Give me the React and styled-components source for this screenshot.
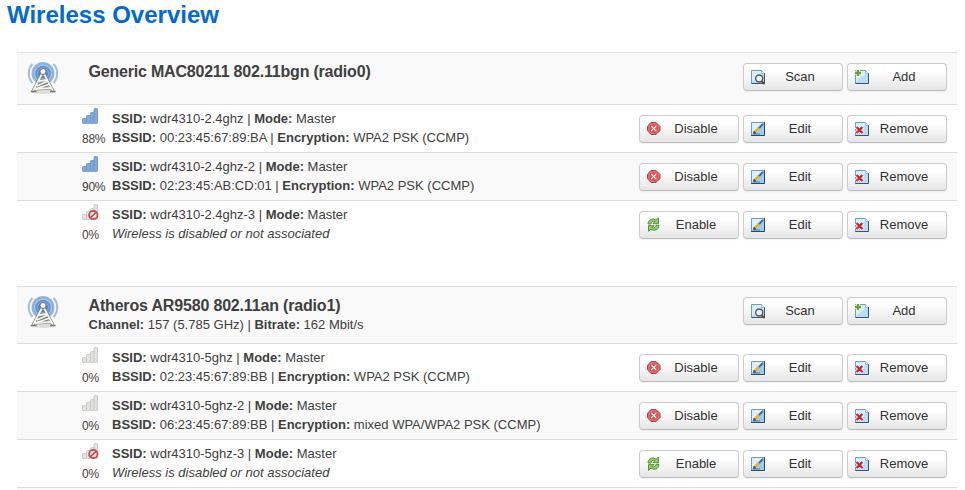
import React from "react";
import styled, { createGlobalStyle } from "styled-components";

const GlobalStyle = createGlobalStyle`
  * { box-sizing: border-box; }
  body {
    margin: 0;
    background: #fff;
    color: #404040;
    font: 13px/19px "Liberation Sans", Arial, sans-serif;
    overflow: hidden;
  }
`;

const Page = styled.main`
  width: 965px;
  height: 490px;
  overflow: hidden;
`;
const Title = styled.h2`
  margin: 0;
  height: 52px;
  padding-left: 7px;
  color: #0069d6;
  font-size: 24px;
  line-height: 30px;
`;
const Radio = styled.section`
  width: 940px;
  margin: 0 0 38px 17px;
`;
const Row = styled.div`
  display: flex;
  align-items: flex-start;
  height: ${(p) => p.$height || 48}px;
  padding-right: 10px;
  border-top: 1px solid #ddd;
  background: ${(p) => (p.$shaded ? "#f9f9f9" : "#fff")};
`;
const Footer = styled.div`
  height: 10px;
  margin: -38px 8px 0 17px;
  border-top: 1px solid #ddd;
  background: #f9f9f9;
`;
const RadioIconCell = styled.div`
  width: 71.500px;
  padding: 8px 0 0 10px;
  svg { display: block; }
`;
const SignalCell = styled.div`
  width: 95px;
  padding: 3px 0 0 65px;
  svg { display: block; }
`;
const Percent = styled.div`
  margin-top: 5px;
  font-size: 12px;
  line-height: 18px;
  letter-spacing: -0.250px;
  white-space: nowrap;
`;
const Details = styled.div`
  flex: 1;
  padding-top: ${(p) => p.$top || 4}px;
  white-space: nowrap;
`;
const RadioName = styled.div`
  font-size: 16px;
  font-weight: bold;
  letter-spacing: ${(p) => p.$spacing}px;
`;
const Line = styled.div`
  height: 19px;
`;
const Actions = styled.div`
  display: flex;
  gap: 4px;
  padding-top: 10px;
`;
const Button = styled.button`
  display: flex;
  align-items: center;
  width: 100px;
  height: 28px;
  padding: 0 7px 0 6px;
  border: 1px solid #ccc;
  border-bottom-color: #bbb;
  border-radius: 4px;
  background: linear-gradient(#fff, #fff 25%, #e6e6e6);
  box-shadow: inset 0 1px 0 rgba(255,255,255,.2), 0 1px 2px rgba(0,0,0,.05);
  color: #333;
  font: 13px/18px "Liberation Sans", Arial, sans-serif;
`;
const Label = styled.span`
  flex: 1;
  padding: 0 1px 1px 0;
  text-align: center;
`;

function AntennaIcon() {
  return (
    <svg width="32" height="34" viewBox="0 0 32 34" fill="none">
      <defs>
        <radialGradient id="wave" cx=".5" cy=".5" r=".5">
          <stop offset="0" stopColor="#3f79bd" />
          <stop offset=".65" stopColor="#6797d2" />
          <stop offset="1" stopColor="#9dbfe5" />
        </radialGradient>
      </defs>
      <ellipse cx="16" cy="30.500" rx="13" ry="2.500" fill="#ddd" />
      <circle cx="16" cy="12.500" r="11.500" fill="url(#wave)" />
      <circle cx="16" cy="12.500" r="8.500" stroke="#a9c9ea" strokeWidth="1.300" />
      <circle cx="16" cy="12.500" r="5.500" stroke="#8ab2df" />
      <path d="M5.500 3a14 14 0 0 0 0 19M26.500 3a14 14 0 0 1 0 19" stroke="#a3bddb" strokeWidth="2" />
      <path d="M15 13 6 30M17 13l9 17M12 20l8-1M10 25l11-5M8 28l15-5M8 28l17-1" stroke="#77796f" strokeWidth="3" />
      <path d="M15 13 6 30M17 13l9 17M12 20l8-1M10 25l11-5M8 28l15-5M8 28l17-1" stroke="#f4f4ef" strokeWidth="1.800" />
      <path d="M4 30.500h5.500M23 30.500h5.500" stroke="#777" strokeWidth="1.500" />
      <circle cx="16" cy="10.500" r="3" fill="#f7f7f2" stroke="#77766b" />
    </svg>
  );
}

function SignalIcon({ active, disabled }) {
  const fill = active ? "#80a9d6" : "#e2e2df";
  const stroke = active ? "#7199c8" : "#c8c8c5";
  return (
    <svg width="17" height="17" viewBox="0 0 17 17">
      <g fill={fill} stroke={stroke} strokeWidth=".9">
        <rect x=".5" y="10.500" width="4" height="5" rx=".7" />
        <rect x="4.500" y="7.500" width="4" height="8" rx=".7" />
        <rect x="8.500" y="4.500" width="3.500" height="11" rx=".7" />
        <rect x="12" y=".5" width="3.500" height="15" rx=".7" />
      </g>
      {disabled && (
        <g fill="none">
          <circle cx="11.300" cy="11" r="4.200" fill="#f3e7e5" stroke="#c94646" strokeWidth="1.800" />
          <path d="m8.500 13.700 5.600-5.400" stroke="#c94646" strokeWidth="1.600" />
        </g>
      )}
    </svg>
  );
}

function Document() {
  return (
    <>
      <path d="M1 1h14v14H1z" fill="#fff" />
      <path d="M1.500 1.500h10l3 3v10h-13z" fill="#b9dcfa" stroke="#7799bb" />
      <path d="M2 2h9v4L2 13z" fill="#d8edff" />
      <path d="M14.500 4v10.500h-13" fill="none" stroke="#35577e" />
      <path d="M11.500 1.500v3h3" fill="#fff" stroke="#81a4c6" strokeWidth=".7" />
    </>
  );
}

function ActionIcon({ name }) {
  return (
    <svg width="16" height="16" viewBox="0 0 16 16" fill="none">
      {name === "Scan" && (
        <>
          <Document />
          <circle cx="9.200" cy="9.500" r="3.500" fill="#eaf6ff" stroke="#5c5754" strokeWidth="1.400" />
          <path d="m11.500 12 3 3" stroke="#76452b" strokeWidth="2" />
        </>
      )}
      {name === "Add" && (
        <>
          <Document />
          <path d="M4 0v8M0 4h8" stroke="#fff" strokeWidth="4" />
          <path d="M4 1v6M1 4h6" stroke="#62a92b" strokeWidth="2.400" />
        </>
      )}
      {name === "Edit" && (
        <>
          <path d="M1 1h14v14H1z" fill="#fff" />
          <path d="M1.500 1.500h13v13h-13z" fill="#9fcaf3" stroke="#729bc3" />
          <path d="M2 2h11L3 13H2z" fill="#dceeff" />
          <path d="M14.500 1v13.500H1" stroke="#244a76" />
          <path d="m8 8 5-5" stroke="#45678d" strokeWidth="2" />
          <path d="m5 11 4-4" stroke="#e8b32c" strokeWidth="3" />
          <path d="m3 13 1-3 2 2zM4 13h6" fill="#775b25" stroke="#31547c" strokeWidth=".7" />
        </>
      )}
      {name === "Remove" && (
        <>
          <Document />
          <path d="m2.500 6 6 6m0-6-6 6" stroke="#fff" strokeWidth="4" />
          <path d="m2.500 6 6 6m0-6-6 6" stroke="#d51f2a" strokeWidth="2.300" />
        </>
      )}
      {name === "Disable" && (
        <>
          <path d="M5 1.500h5l4 4v4l-4 4H5l-3.500-4v-4z" fill="#df5155" stroke="#a74448" />
          <path d="M5.500 2.700h4L12.700 6v3.300l-3.200 3.200h-4L2.700 9.300V6z" stroke="#ec8a8a" strokeWidth=".7" />
          <path d="m5.200 5 5 5m0-5-5 5" stroke="#fff1ed" strokeWidth="1.200" />
        </>
      )}
      {name === "Enable" && (
        <>
          <path d="M2 7q.2-5 5.500-5l2.500 1.200L12.500 1v5.700H7l2-2Q5.500 3.500 5 7z" fill="#91cf66" stroke="#4a8a31" strokeWidth=".9" />
          <path d="M13 8.300q-.2 5-5.500 5L5 12.100 2.500 14.300V8.600H8l-2 2q3.500 1.200 4-2.300z" fill="#91cf66" stroke="#4a8a31" strokeWidth=".9" />
        </>
      )}
    </svg>
  );
}

function ActionButton({ name }) {
  return (
    <Button type="button">
      <ActionIcon name={name} />
      <Label>{name}</Label>
    </Button>
  );
}

const radios = [
  {
    name: "Generic MAC80211 802.11bgn (radio0)",
    spacing: -0.2,
    networks: [
      { ssid: "wdr4310-2.4ghz", bssid: "00:23:45:67:89:BA", encryption: "WPA2 PSK (CCMP)", signal: 88 },
      { ssid: "wdr4310-2.4ghz-2", bssid: "02:23:45:AB:CD:01", encryption: "WPA2 PSK (CCMP)", signal: 90 },
      { ssid: "wdr4310-2.4ghz-3", signal: 0 },
    ],
  },
  {
    name: "Atheros AR9580 802.11an (radio1)",
    spacing: -0.17,
    channel: "157 (5.785 GHz)",
    bitrate: "162 Mbit/s",
    networks: [
      { ssid: "wdr4310-5ghz", bssid: "02:23:45:67:89:BB", encryption: "WPA2 PSK (CCMP)", signal: 0 },
      { ssid: "wdr4310-5ghz-2", bssid: "06:23:45:67:89:BB", encryption: "mixed WPA/WPA2 PSK (CCMP)", signal: 0 },
      { ssid: "wdr4310-5ghz-3", signal: 0 },
    ],
  },
];

function NetworkRow({ network, shaded }) {
  const disabled = !network.bssid;
  return (
    <Row $shaded={shaded}>
      <SignalCell>
        <SignalIcon active={network.signal > 0} disabled={disabled} />
        <Percent>{network.signal}%</Percent>
      </SignalCell>
      <Details>
        <Line><b>SSID:</b> {network.ssid} | <b>Mode:</b> Master</Line>
        <Line>
          {disabled ? <em>Wireless is disabled or not associated</em> : (
            <><b>BSSID:</b> {network.bssid} | <b>Encryption:</b> {network.encryption}</>
          )}
        </Line>
      </Details>
      <Actions>
        <ActionButton name={disabled ? "Enable" : "Disable"} />
        <ActionButton name="Edit" />
        <ActionButton name="Remove" />
      </Actions>
    </Row>
  );
}

export default function App() {
  return (
    <>
      <GlobalStyle />
      <Page>
        <Title>Wireless Overview</Title>
        {radios.map((radio) => (
          <Radio key={radio.name}>
            <Row $shaded $height={radio.channel ? 57 : 52}>
              <RadioIconCell><AntennaIcon /></RadioIconCell>
              <Details $top={9}>
                <RadioName $spacing={radio.spacing}>{radio.name}</RadioName>
                {radio.channel && (
                  <Line><b>Channel:</b> {radio.channel} | <b>Bitrate:</b> {radio.bitrate}</Line>
                )}
              </Details>
              <Actions>
                <ActionButton name="Scan" />
                <ActionButton name="Add" />
              </Actions>
            </Row>
            {radio.networks.map((network, index) => (
              <NetworkRow key={network.ssid} network={network} shaded={index === 1} />
            ))}
          </Radio>
        ))}
        <Footer />
      </Page>
    </>
  );
}
